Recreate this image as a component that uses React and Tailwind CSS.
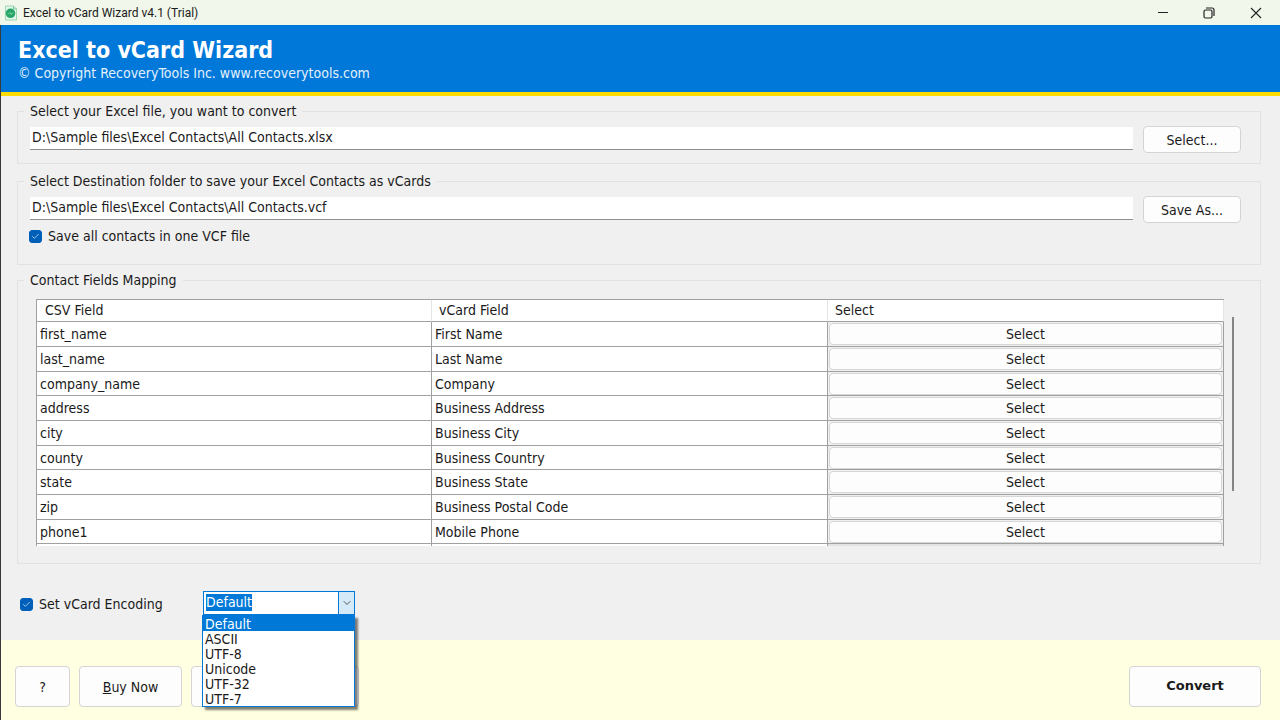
import { useState, useRef, useEffect } from 'react'
import { Check, ChevronDown } from 'lucide-react'

const FIELDS = [
  { csv: 'first_name', vcard: 'First Name' },
  { csv: 'last_name', vcard: 'Last Name' },
  { csv: 'company_name', vcard: 'Company' },
  { csv: 'address', vcard: 'Business Address' },
  { csv: 'city', vcard: 'Business City' },
  { csv: 'county', vcard: 'Business Country' },
  { csv: 'state', vcard: 'Business State' },
  { csv: 'zip', vcard: 'Business Postal Code' },
  { csv: 'phone1', vcard: 'Mobile Phone' },
]

const ENCODINGS = ['Default', 'ASCII', 'UTF-8', 'Unicode', 'UTF-32', 'UTF-7']

function AppIcon() {
  return (
    <svg width="14" height="16" viewBox="0 0 14 16" fill="none" aria-hidden="true">
      <path d="M1.5 1h8L12.5 4V15H1.5z" fill="#e3f5ea" stroke="#9bd8b4" />
      <path d="M9.5 1v3h3" stroke="#7cc79b" />
      <circle cx="6.5" cy="8.3" r="4.8" fill="#27a567" />
      <path d="M3.5 8.7H5l1-1.5L7 9.7l1-1.5h1.5" stroke="#7fd3a6" strokeWidth="0.8" />
    </svg>
  )
}

function TitleBar() {
  return (
    <div className="flex h-[25px] items-center justify-between bg-[#f1f7ea] pl-1">
      <div className="flex items-center gap-[5px]">
        <AppIcon />
        <span className="font-[Roboto,sans-serif] text-xs text-[#1b1b1b]">
          Excel to vCard Wizard v4.1 (Trial)
        </span>
      </div>
      <div className="flex h-full text-[#222]">
        <button type="button" aria-label="Minimize" className="flex w-[46px] items-center justify-center">
          <svg width="12" height="12" viewBox="0 0 12 12" stroke="currentColor" fill="none">
            <path d="M1 5.5h10" />
          </svg>
        </button>
        <button type="button" aria-label="Restore" className="flex w-[46px] items-center justify-center">
          <svg width="12" height="12" viewBox="0 0 12 12" stroke="currentColor" strokeWidth="1.2" fill="none">
            <rect x="1" y="3" width="8" height="8" rx="1.5" />
            <path d="M3 1h6a2 2 0 0 1 2 2v6" />
          </svg>
        </button>
        <button type="button" aria-label="Close" className="flex w-12 items-center justify-center">
          <svg width="12" height="12" viewBox="0 0 12 12" stroke="currentColor" strokeWidth="1.1" fill="none">
            <path d="M1 1l10 10M11 1L1 11" />
          </svg>
        </button>
      </div>
    </div>
  )
}

function Group({ title, className = '', children }) {
  return (
    <fieldset className={`min-w-0 border border-[#e2e2e2] ${className}`}>
      <legend className="ml-1.5 px-1.5 leading-[18px]">{title}</legend>
      {children}
    </fieldset>
  )
}

function PathRow({ id, label, value, onChange, button }) {
  return (
    <div className="flex items-start gap-2.5 pt-1.5 pr-[19px] pl-3">
      <input
        id={id}
        type="text"
        aria-label={label}
        value={value}
        onChange={(e) => onChange(e.target.value)}
        className="mt-px h-[23px] min-w-0 flex-1 border-b border-[#8f8f8f] bg-white px-0.5 pb-0.5 outline-none"
      />
      <button
        type="button"
        className="h-[27px] w-[98px] rounded border border-[#d4d4d4] bg-[#fdfdfd] hover:bg-[#f3f9ff]"
      >
        {button}
      </button>
    </div>
  )
}

function CheckBox({ id, label, checked, onChange }) {
  return (
    <label htmlFor={id} className="flex items-center gap-1.5 leading-[18px]">
      <span className="relative flex h-[13px] w-[13px]">
        <input
          id={id}
          type="checkbox"
          checked={checked}
          onChange={(e) => onChange(e.target.checked)}
          className="h-[13px] w-[13px] appearance-none rounded-[3px] border border-[#005fb8] bg-white checked:bg-[#005fb8]"
        />
        {checked && (
          <Check className="pointer-events-none absolute top-0.5 left-0.5 h-[9px] w-[9px] text-[#cfe3f5]" />
        )}
      </span>
      {label}
    </label>
  )
}

function MappingTable() {
  return (
    <div className="flex h-[247px] items-start overflow-hidden">
      <div className="h-full flex-1 overflow-hidden border-t border-l border-[#a0a0a0] bg-white">
        <table className="w-full table-fixed border-separate border-spacing-0">
          <thead>
            <tr className="h-[22px] text-left">
              <th className="w-[395px] border-r border-b border-r-[#e5e5e5] border-b-[#a0a0a0] p-0 pl-2 leading-[21px] font-normal">
                CSV Field
              </th>
              <th className="border-r border-b border-r-[#e5e5e5] border-b-[#a0a0a0] p-0 pl-[7px] leading-[21px] font-normal">
                vCard Field
              </th>
              <th className="border-r border-b border-r-[#e5e5e5] border-b-[#a0a0a0] p-0 pl-[7px] leading-[21px] font-normal">
                Select
              </th>
            </tr>
          </thead>
          <tbody className="[&_td]:border-r [&_td]:border-b [&_td]:border-[#a0a0a0] [&>tr]:h-[25px] [&>tr:nth-child(3n)]:h-6">
            {FIELDS.map((f) => (
              <tr key={f.csv}>
                <td className="p-0 pl-[3px] leading-[18px]">{f.csv}</td>
                <td className="p-0 pl-[3px] leading-[18px]">{f.vcard}</td>
                <td className="bg-[#f0f0f0] px-px py-0">
                  <button
                    type="button"
                    className="block h-[22px] w-full rounded border border-[#d6d6d6] bg-[#fdfdfd] leading-[18px]"
                  >
                    Select
                  </button>
                </td>
              </tr>
            ))}
            <tr>
              <td className="p-0" />
              <td className="p-0" />
              <td className="bg-[#e2e2e2] p-0" />
            </tr>
          </tbody>
        </table>
      </div>
      <div className="mt-[18px] ml-2 h-[174px] w-0.5 bg-[#858585]" />
    </div>
  )
}

function EncodingCombo({ value, onChange }) {
  const inputRef = useRef(null)
  const [open, setOpen] = useState(true)

  useEffect(() => {
    inputRef.current?.focus()
    inputRef.current?.select()
  }, [])

  return (
    <div className="relative w-[152px]">
      <div className="flex h-6 border border-[#0078d7] bg-white">
        <input
          ref={inputRef}
          type="text"
          aria-label="vCard encoding"
          value={value}
          onChange={(e) => onChange(e.target.value)}
          className="mt-0.5 h-[17px] min-w-0 flex-1 px-0.5 leading-[17px] outline-none selection:bg-[#0078d7] selection:text-white"
        />
        <button
          type="button"
          aria-label="Show encodings"
          onClick={() => setOpen(!open)}
          className="flex w-4 items-center justify-center border-l border-[#0078d7] bg-[#d5eaf8] text-[#555]"
        >
          <ChevronDown className="h-3 w-3" />
        </button>
      </div>
      {open && (
        <select
          size={6}
          aria-label="Encoding list"
          value={value}
          onChange={(e) => onChange(e.target.value)}
          className="absolute top-6 -left-px h-[92px] w-[153px] appearance-none overflow-hidden rounded-none border border-[#0078d7] bg-white p-0 shadow-[3px_3px_2px_rgba(0,0,0,0.5)] outline-none"
        >
          {ENCODINGS.map((enc) => (
            <option
              key={enc}
              value={enc}
              className="h-[15px] min-h-0 px-0.5 py-0 leading-[15px] text-[#1a1a1a] checked:bg-[#0078d7] checked:bg-linear-to-r checked:from-[#0078d7] checked:to-[#0078d7] checked:text-white"
            >
              {enc}
            </option>
          ))}
        </select>
      )}
    </div>
  )
}

export default function App() {
  const [source, setSource] = useState('D:\\Sample files\\Excel Contacts\\All Contacts.xlsx')
  const [target, setTarget] = useState('D:\\Sample files\\Excel Contacts\\All Contacts.vcf')
  const [oneFile, setOneFile] = useState(true)
  const [useEncoding, setUseEncoding] = useState(true)
  const [encoding, setEncoding] = useState('Default')

  return (
    <div className="flex min-h-screen flex-col bg-[#f0f0f0] font-['DejaVu_Sans_Condensed','DejaVu_Sans',sans-serif] text-sm text-[#1a1a1a]">
      <TitleBar />

      <div className="flex flex-1 flex-col border-l border-[#3a3a3a]">
        {/* Banner */}
        <header className="h-[71px] border-b-4 border-[#ffdc00] bg-[#0078d9] pt-3 pl-[17px] text-white">
          <h1 className="text-[23px] leading-[26px] font-bold">Excel to vCard Wizard</h1>
          <p className="leading-5 text-[#e3f0fb]">
            © Copyright RecoveryTools Inc. www.recoverytools.com
          </p>
        </header>

        <main className="flex flex-1 flex-col pt-1.5 pr-[19px] pl-4">
          <Group title="Select your Excel file, you want to convert" className="h-[62px]">
            <PathRow id="source" label="Excel file" value={source} onChange={setSource} button="Select..." />
          </Group>

          <Group
            title="Select Destination folder to save your Excel Contacts as vCards"
            className="mt-2 h-[93px]"
          >
            <PathRow id="target" label="Destination file" value={target} onChange={setTarget} button="Save As..." />
            <div className="flex pt-1 pl-[11px]">
              <CheckBox
                id="one-file"
                label="Save all contacts in one VCF file"
                checked={oneFile}
                onChange={setOneFile}
              />
            </div>
          </Group>

          <Group title="Contact Fields Mapping" className="mt-1.5 h-[293px]">
            <div className="pt-2.5 pr-[26px] pl-[18px]">
              <MappingTable />
            </div>
          </Group>

          <div className="mt-[27px] flex items-center pl-[3px]">
            <div className="w-[183px] pt-0.5">
              <CheckBox
                id="set-encoding"
                label="Set vCard Encoding"
                checked={useEncoding}
                onChange={setUseEncoding}
              />
            </div>
            <EncodingCombo value={encoding} onChange={setEncoding} />
          </div>
        </main>

        <footer className="flex h-20 items-start gap-[9px] bg-[#ffffe1] pt-[26px] pr-[19px] pl-3.5">
          <button type="button" className="h-[41px] w-[55px] rounded border border-[#d4d4d4] bg-[#fdfdfd]">
            ?
          </button>
          <button type="button" className="h-[41px] w-[103px] rounded border border-[#d4d4d4] bg-[#fdfdfd]">
            <span className="underline">B</span>uy Now
          </button>
          <button
            type="button"
            aria-label="Activate"
            className="h-[41px] w-[168px] rounded border border-[#d4d4d4] bg-[#fdfdfd]"
          />
          <button
            type="button"
            className="ml-auto h-[41px] w-[132px] rounded border border-[#d4d4d4] bg-[#fdfdfd] font-['DejaVu_Sans',sans-serif] text-[13px] font-bold"
          >
            Convert
          </button>
        </footer>
      </div>
    </div>
  )
}
